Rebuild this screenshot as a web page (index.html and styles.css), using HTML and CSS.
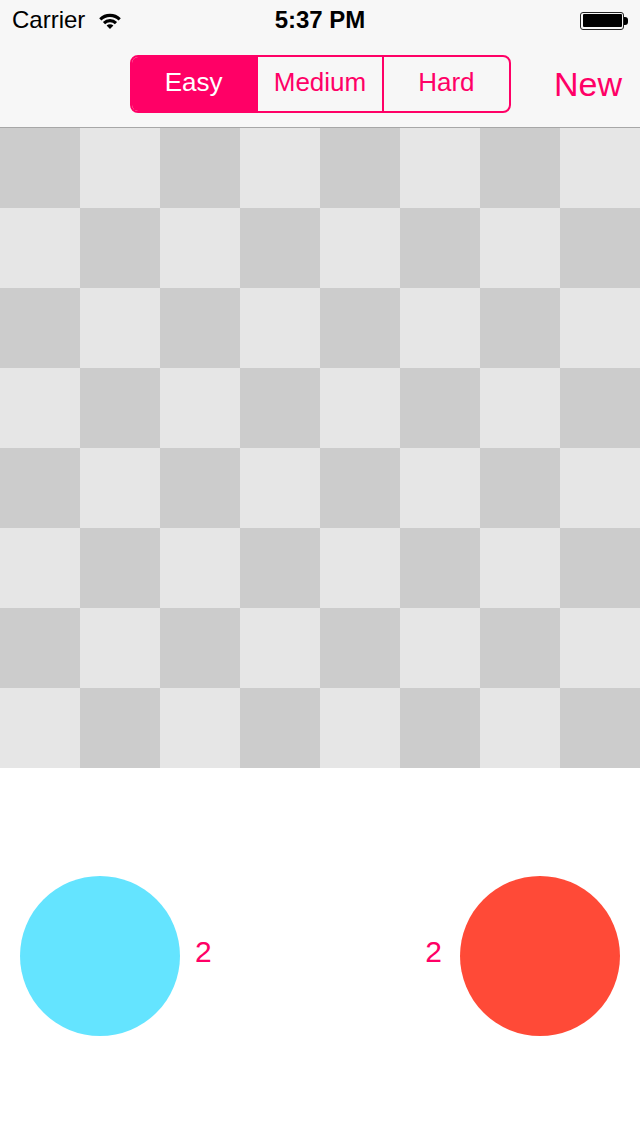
FILE: index.html
```html
<!DOCTYPE html>
<html>
<head>
<meta charset="utf-8">
<link rel="stylesheet" href="styles.css">
</head>
<body>
<div class="app">
  <header class="header">
    <div class="status">
      <div class="status-left">
        <span class="carrier">Carrier</span>
        <svg class="wifi" width="24" height="17" viewBox="0 0 24 17">
          <path d="M1.2 6.2 A15.5 15.5 0 0 1 22.8 6.2 L20.6 8.5 A12.3 12.3 0 0 0 3.4 8.5 Z" fill="#000"/>
          <path d="M4.9 10 A10.2 10.2 0 0 1 19.1 10 L16.9 12.2 A7 7 0 0 0 7.1 12.2 Z" fill="#000"/>
          <path d="M8.6 13.6 A4.9 4.9 0 0 1 15.4 13.6 L12 17 Z" fill="#000"/>
        </svg>
      </div>
      <div class="time">5:37 PM</div>
      <div class="status-right">
        <div class="battery"><div class="battery-fill"></div></div>
        <div class="battery-nub"></div>
      </div>
    </div>
    <nav class="nav">
      <div class="nav-side"></div>
      <div class="segmented">
        <div class="seg seg-active">Easy</div>
        <div class="seg">Medium</div>
        <div class="seg">Hard</div>
      </div>
      <div class="nav-side nav-right"><span class="new-btn">New</span></div>
    </nav>
  </header>
  <main class="board" id="board"></main>
  <section class="scores">
    <div class="player">
      <div class="disc disc-blue"></div>
      <span class="score">2</span>
    </div>
    <div class="player player-right">
      <span class="score">2</span>
      <div class="disc disc-red"></div>
    </div>
  </section>
</div>
<script src="app.js"></script>
</body>
</html>
```
FILE: app.js
```js
var board = document.getElementById('board');
for (var r = 0; r < 8; r++) {
  for (var c = 0; c < 8; c++) {
    var d = document.createElement('div');
    d.className = 'cell ' + (((r + c) % 2 === 0) ? 'cell-dark' : 'cell-light');
    board.appendChild(d);
  }
}
```
FILE: styles.css
```css
* { box-sizing: border-box; }
html, body { margin: 0; padding: 0; }
body {
  width: 640px;
  height: 1136px;
  background: #ffffff;
  font-family: "Liberation Sans", Arial, sans-serif;
  overflow: hidden;
}
.app {
  display: flex;
  flex-direction: column;
  height: 1136px;
}
.header {
  background: #f7f7f7;
  border-bottom: 1px solid #a7a7a7;
  height: 128px;
  display: flex;
  flex-direction: column;
}
.status {
  height: 40px;
  display: grid;
  grid-template-columns: 1fr auto 1fr;
  align-items: center;
  padding: 0 12px;
  color: #000;
}
.status-left {
  display: flex;
  align-items: center;
  gap: 13px;
}
.carrier {
  font-size: 24px;
  line-height: 40px;
}
.wifi { display: block; margin-top: 1px; }
.time {
  font-size: 24px;
  font-weight: bold;
  line-height: 40px;
}
.status-right {
  display: flex;
  align-items: center;
  justify-content: flex-end;
}
.battery {
  width: 44px;
  height: 18px;
  border: 1.5px solid #222;
  border-radius: 3px;
  padding: 1.5px;
  margin-top: 1px;
}
.battery-fill {
  width: 100%;
  height: 100%;
  background: #000;
  border-radius: 1px;
}
.battery-nub {
  width: 4px;
  height: 8px;
  background: #000;
  border-radius: 0 3px 3px 0;
  margin-top: 1px;
}
.nav {
  flex: 1;
  display: grid;
  grid-template-columns: 1fr auto 1fr;
  align-items: center;
}
.nav-right {
  display: flex;
  justify-content: flex-end;
  padding-right: 18px;
}
.new-btn {
  font-size: 34px;
  color: #ff0066;
  line-height: 40px;
  margin-top: 1px;
}
.segmented {
  display: flex;
  width: 381px;
  height: 58px;
  border: 2px solid #ff0066;
  border-radius: 8px;
  overflow: hidden;
}
.seg {
  flex: 1;
  display: flex;
  align-items: center;
  justify-content: center;
  font-size: 26px;
  color: #ff0066;
  border-left: 2px solid #ff0066;
  padding-bottom: 2px;
}
.seg:first-child { border-left: none; }
.seg-active {
  background: #ff0066;
  color: #ffffff;
}
.board {
  display: grid;
  grid-template-columns: repeat(8, 80px);
  grid-template-rows: repeat(8, 80px);
  width: 640px;
  height: 640px;
}
.cell-dark { background: #cccccc; }
.cell-light { background: #e6e6e6; }
.scores {
  display: flex;
  justify-content: space-between;
  align-items: center;
  padding: 108px 20px 0 20px;
}
.player {
  display: flex;
  align-items: center;
  gap: 15px;
}
.player-right { gap: 18px; }
.disc {
  width: 160px;
  height: 160px;
  border-radius: 50%;
}
.disc-blue { background: #64e4ff; }
.disc-red { background: #ff4a37; }
.score {
  font-size: 30px;
  color: #ff0066;
  line-height: 34px;
  margin-bottom: 8px;
}
```
